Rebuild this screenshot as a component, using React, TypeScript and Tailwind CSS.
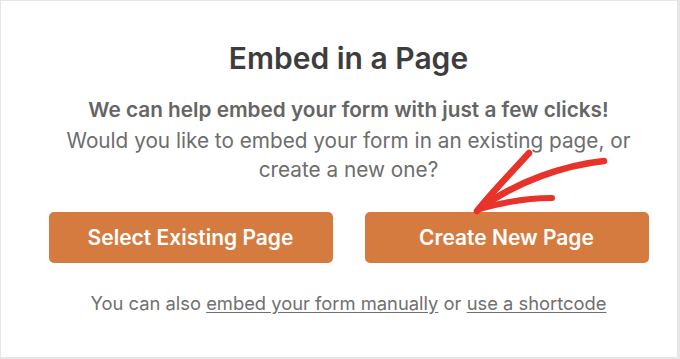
import React from "react";

export default function App() {
  return (
    <div
      className="w-[680px] h-[359px] bg-white border-t border-l border-r-[3px] border-b-[2px] border-[#e6e6e6] flex flex-col items-center relative pl-[19px]"
      style={{ fontFamily: "Inter, 'Noto Sans', sans-serif" }}
    >
      <h1 className="mt-[39px] text-[30px] leading-[36px] font-semibold text-[#3d3d3d]">
        Embed in a Page
      </h1>
      <div className="mt-[19px] text-center text-[20.75px] leading-[29px] text-[#6d6d6d]">
        <p className="font-semibold text-[#656565] mb-[2px]">We can help embed your form with just a few clicks!</p>
        <p>Would you like to embed your form in an existing page, or</p>
        <p>create a new one?</p>
      </div>
      <div className="mt-[28px] flex gap-[32px]">
        <button className="w-[284px] h-[51px] rounded-[5px] bg-[#d67b40] text-white text-[21px] font-semibold">
          Select Existing Page
        </button>
        <button className="w-[284px] h-[51px] rounded-[5px] bg-[#d67b40] text-white text-[21px] font-semibold">
          Create New Page
        </button>
      </div>
      <p className="mt-[28px] text-[18.35px] leading-[24px] text-[#707070]">
        You can also <span className="underline underline-offset-2">embed your form manually</span> or{" "}
        <span className="underline underline-offset-2">use a shortcode</span>
      </p>
      <svg
        className="absolute left-0 top-0 pointer-events-none"
        width="680"
        height="359"
        viewBox="0 0 680 359"
      >
        <g fill="none" stroke="#e8322a" strokeLinecap="round" strokeLinejoin="round">
          <path d="M603 160 C 565 164 515 180 477 209" strokeWidth="6.5" />
          <path d="M528 152 C 510 172 492 190 476 210" strokeWidth="6.5" />
          <path d="M551 197 C 528 197 503 201 478 208" strokeWidth="6" />
        </g>
      </svg>
    </div>
  );
}
